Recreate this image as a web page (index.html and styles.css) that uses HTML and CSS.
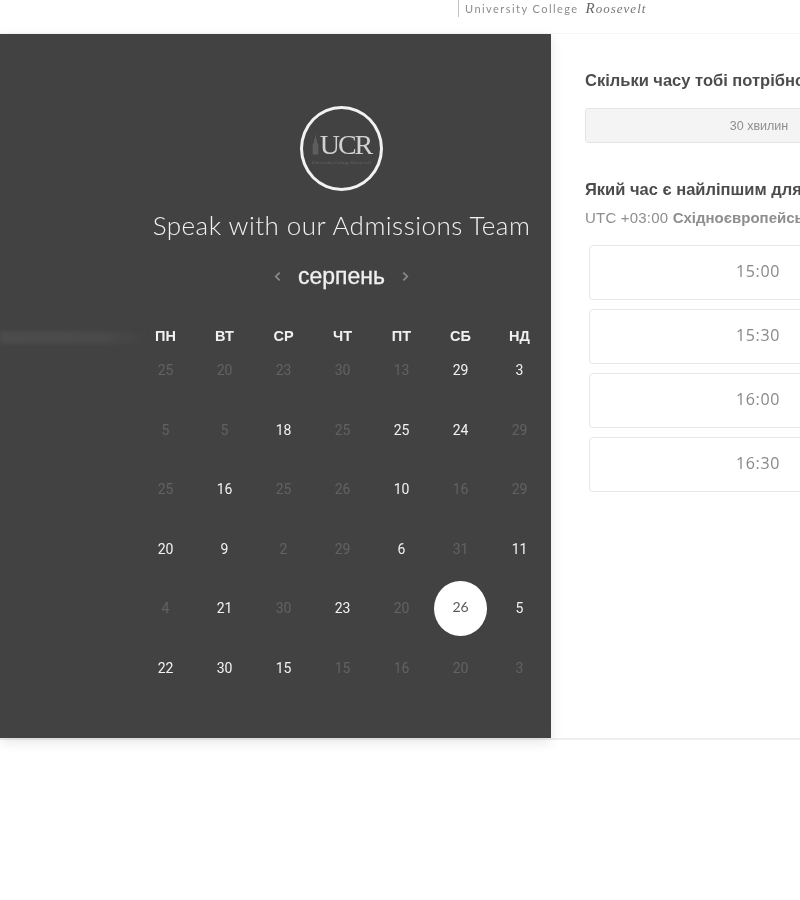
FILE: index.html
```html
<!DOCTYPE html>
<html lang="uk">
<head>
    <meta charset="UTF-8">
    <meta name="viewport" content="width=device-width, initial-scale=1.0">
    <title>Speak with our Admissions Team</title>
    <link rel="stylesheet" href="styles.css">
</head>
<body>
    <header class="topbar">
        <div class="brand">
            <span class="brand-name">University College</span>
            <span class="brand-script">Roosevelt</span>
        </div>
    </header>

    <main class="booking">
        <section class="calendar-panel">
            <div class="smear"></div>
            <div class="calendar">
                <div class="logo">
                    <svg class="logo-tower" viewBox="0 0 10 30" aria-hidden="true">
                        <path d="M5 0 L6 8 L7 8 L7 13 L9 15 L9 30 L1 30 L1 15 L3 13 L3 8 L4 8 Z"/>
                    </svg>
                    <span class="logo-letters">UCR</span>
                    <span class="logo-sub">University College Roosevelt</span>
                </div>
                <h1 class="title">Speak with our Admissions Team</h1>
                <div class="month">
                    <svg class="chevron" viewBox="0 0 8 12" aria-hidden="true"><path d="M6.5 1.5 L2 6 L6.5 10.5"/></svg>
                    <span class="month-name">серпень</span>
                    <svg class="chevron" viewBox="0 0 8 12" aria-hidden="true"><path d="M1.5 1.5 L6 6 L1.5 10.5"/></svg>
                </div>
                <div class="weekdays">
                    <span>ПН</span><span>ВТ</span><span>СР</span><span>ЧТ</span><span>ПТ</span><span>СБ</span><span>НД</span>
                </div>
                <div class="days">
                    <span class="day">25</span><span class="day">20</span><span class="day">23</span><span class="day">30</span><span class="day">13</span><span class="day open">29</span><span class="day open">3</span>
                    <span class="day">5</span><span class="day">5</span><span class="day open">18</span><span class="day">25</span><span class="day open">25</span><span class="day open">24</span><span class="day">29</span>
                    <span class="day">25</span><span class="day open">16</span><span class="day">25</span><span class="day">26</span><span class="day open">10</span><span class="day">16</span><span class="day">29</span>
                    <span class="day open">20</span><span class="day open">9</span><span class="day">2</span><span class="day">29</span><span class="day open">6</span><span class="day">31</span><span class="day open">11</span>
                    <span class="day">4</span><span class="day open">21</span><span class="day">30</span><span class="day open">23</span><span class="day">20</span><span class="day"><b class="selected">26</b></span><span class="day open">5</span>
                    <span class="day open">22</span><span class="day open">30</span><span class="day open">15</span><span class="day">15</span><span class="day">16</span><span class="day">20</span><span class="day">3</span>
                </div>
            </div>
        </section>

        <section class="times-panel">
            <h2 class="question">Скільки часу тобі потрібно?</h2>
            <button class="duration" type="button">30 хвилин</button>
            <h2 class="question question-time">Який час є найліпшим для тебе?</h2>
            <p class="timezone">UTC +03:00 <b>Східноєвропейський час</b></p>
            <div class="slots">
                <button class="slot" type="button">15:00</button>
                <button class="slot" type="button">15:30</button>
                <button class="slot" type="button">16:00</button>
                <button class="slot" type="button">16:30</button>
            </div>
        </section>
    </main>
</body>
</html>
```

FILE: styles.css
```css
html, body {
    margin: 0;
    height: 900px;
    overflow: hidden;
    background: #fff;
}
body {
    width: 800px;
    font-family: "Liberation Sans", Arial, sans-serif;
    color: #424242;
}

/* header */
.topbar {
    height: 34px;
    box-sizing: border-box;
    padding-left: 458px;
    border-bottom: 1px solid #f6f6f6;
}
.brand {
    display: flex;
    align-items: baseline;
    gap: 7px;
    width: 200px;
    height: 17px;
    padding-left: 6px;
    border-left: 1px solid #c4c4c4;
    box-sizing: border-box;
    line-height: 17px;
    white-space: nowrap;
    filter: blur(0.4px);
}
.brand-name {
    font-family: "Lato", sans-serif;
    font-size: 11px;
    letter-spacing: 1.45px;
    color: #8c8c8c;
}
.brand-script {
    font-family: "Liberation Serif", serif;
    font-style: italic;
    font-size: 13px;
    letter-spacing: 1px;
    color: #757575;
}
.brand-script::first-letter {
    font-size: 15px;
    color: #666;
}

/* main card */
.booking {
    display: flex;
    height: 704px;
    border-bottom: 2px solid #eeeeee;
    filter: blur(0.35px);
}
.calendar-panel {
    position: relative;
    flex: 0 0 551px;
    display: flex;
    justify-content: flex-end;
    box-sizing: border-box;
    padding-right: 2px;
    background: #424242;
    box-shadow: 0 4px 12px rgba(0, 0, 0, 0.1);
}
.smear {
    position: absolute;
    left: 0;
    top: 297px;
    width: 145px;
    height: 13px;
    background: linear-gradient(to right, #4c4c4c, #4a4a4a 70%, #424242);
    filter: blur(2px);
}
.calendar {
    position: relative;
    width: 413px;
    padding-top: 72px;
    display: flex;
    flex-direction: column;
    align-items: center;
}

/* logo */
.logo {
    width: 83px;
    height: 85px;
    margin-right: 2px;
    box-sizing: border-box;
    border: 3px solid #f2f2f2;
    border-radius: 50%;
    display: flex;
    flex-wrap: wrap;
    align-content: center;
    justify-content: center;
    column-gap: 1px;
}
.logo-tower {
    width: 7px;
    height: 24px;
    fill: #5e5e5e;
    align-self: flex-end;
    margin-bottom: 3px;
}
.logo-letters {
    font-family: "Liberation Serif", serif;
    font-size: 28px;
    line-height: 28px;
    letter-spacing: -2px;
    color: #d2d2d2;
}
.logo-sub {
    width: 100%;
    margin-top: 1px;
    font-family: "Liberation Serif", serif;
    font-size: 5px;
    line-height: 6px;
    text-align: center;
    color: #666;
    white-space: nowrap;
}

.title {
    margin: 15px 2px 0 0;
    font-family: "Lato", sans-serif;
    font-weight: 300;
    font-size: 26px;
    letter-spacing: 0.48px;
    line-height: 38px;
    color: #f2f2f2;
    white-space: nowrap;
}

.month {
    display: flex;
    align-items: center;
    justify-content: center;
    gap: 17px;
    height: 40px;
    margin: 12px 2px 0 0;
}
.month-name {
    font-size: 23px;
    color: #f0f0f0;
    -webkit-text-stroke: 0.3px #f0f0f0;
}
.chevron {
    width: 7px;
    height: 11px;
    fill: none;
    stroke: #8a8a8a;
    stroke-width: 2;
}

.weekdays, .days {
    align-self: stretch;
    display: grid;
    grid-template-columns: repeat(7, 59px);
}
.weekdays {
    height: 28px;
    margin-top: 26px;
    align-items: center;
    justify-items: center;
    font-size: 14.5px;
    font-weight: bold;
    color: #f0f0f0;
}
.days {
    grid-auto-rows: 40px;
    row-gap: 19.6px;
    font-family: "Roboto", sans-serif;
    font-size: 14px;
}
.day {
    display: flex;
    align-items: center;
    justify-content: center;
    color: #626262;
}
.day.open {
    color: #f2f2f2;
}
.selected {
    flex: none;
    display: flex;
    align-items: center;
    justify-content: center;
    width: 53px;
    height: 55px;
    border-radius: 50%;
    background: #fff;
    color: #5a5a5a;
    font-family: "Lato", sans-serif;
    font-weight: 400;
    padding-bottom: 3px;
    box-sizing: border-box;
}

/* right side */
.times-panel {
    flex: none;
    width: 348px;
    padding: 35px 0 0 34px;
}
.question {
    margin: 0;
    font-size: 16.5px;
    line-height: 22px;
    font-weight: bold;
    color: #4c4c4c;
    white-space: nowrap;
}
.duration {
    display: block;
    width: 100%;
    height: 35px;
    margin-top: 17px;
    border: 1px solid #e4e4e4;
    border-radius: 3px;
    background: #f4f4f4;
    font-family: "Liberation Sans", Arial, sans-serif;
    font-size: 12.5px;
    color: #8e8e8e;
}
.question-time {
    margin-top: 35px;
}
.timezone {
    margin: 8px 0 0;
    font-size: 15px;
    letter-spacing: 0.2px;
    line-height: 20px;
    color: #8e8e8e;
    white-space: nowrap;
}
.timezone b {
    letter-spacing: 0;
}
.slots {
    display: flex;
    flex-direction: column;
    gap: 9px;
    width: 338px;
    margin: 17px 0 0 4px;
}
.slot {
    height: 55px;
    padding-bottom: 4px;
    border: 1px solid #e6e6e6;
    border-radius: 4px;
    background: #fff;
    font-family: "Open Sans", sans-serif;
    font-size: 16px;
    letter-spacing: 0.6px;
    color: #888;
}
```
